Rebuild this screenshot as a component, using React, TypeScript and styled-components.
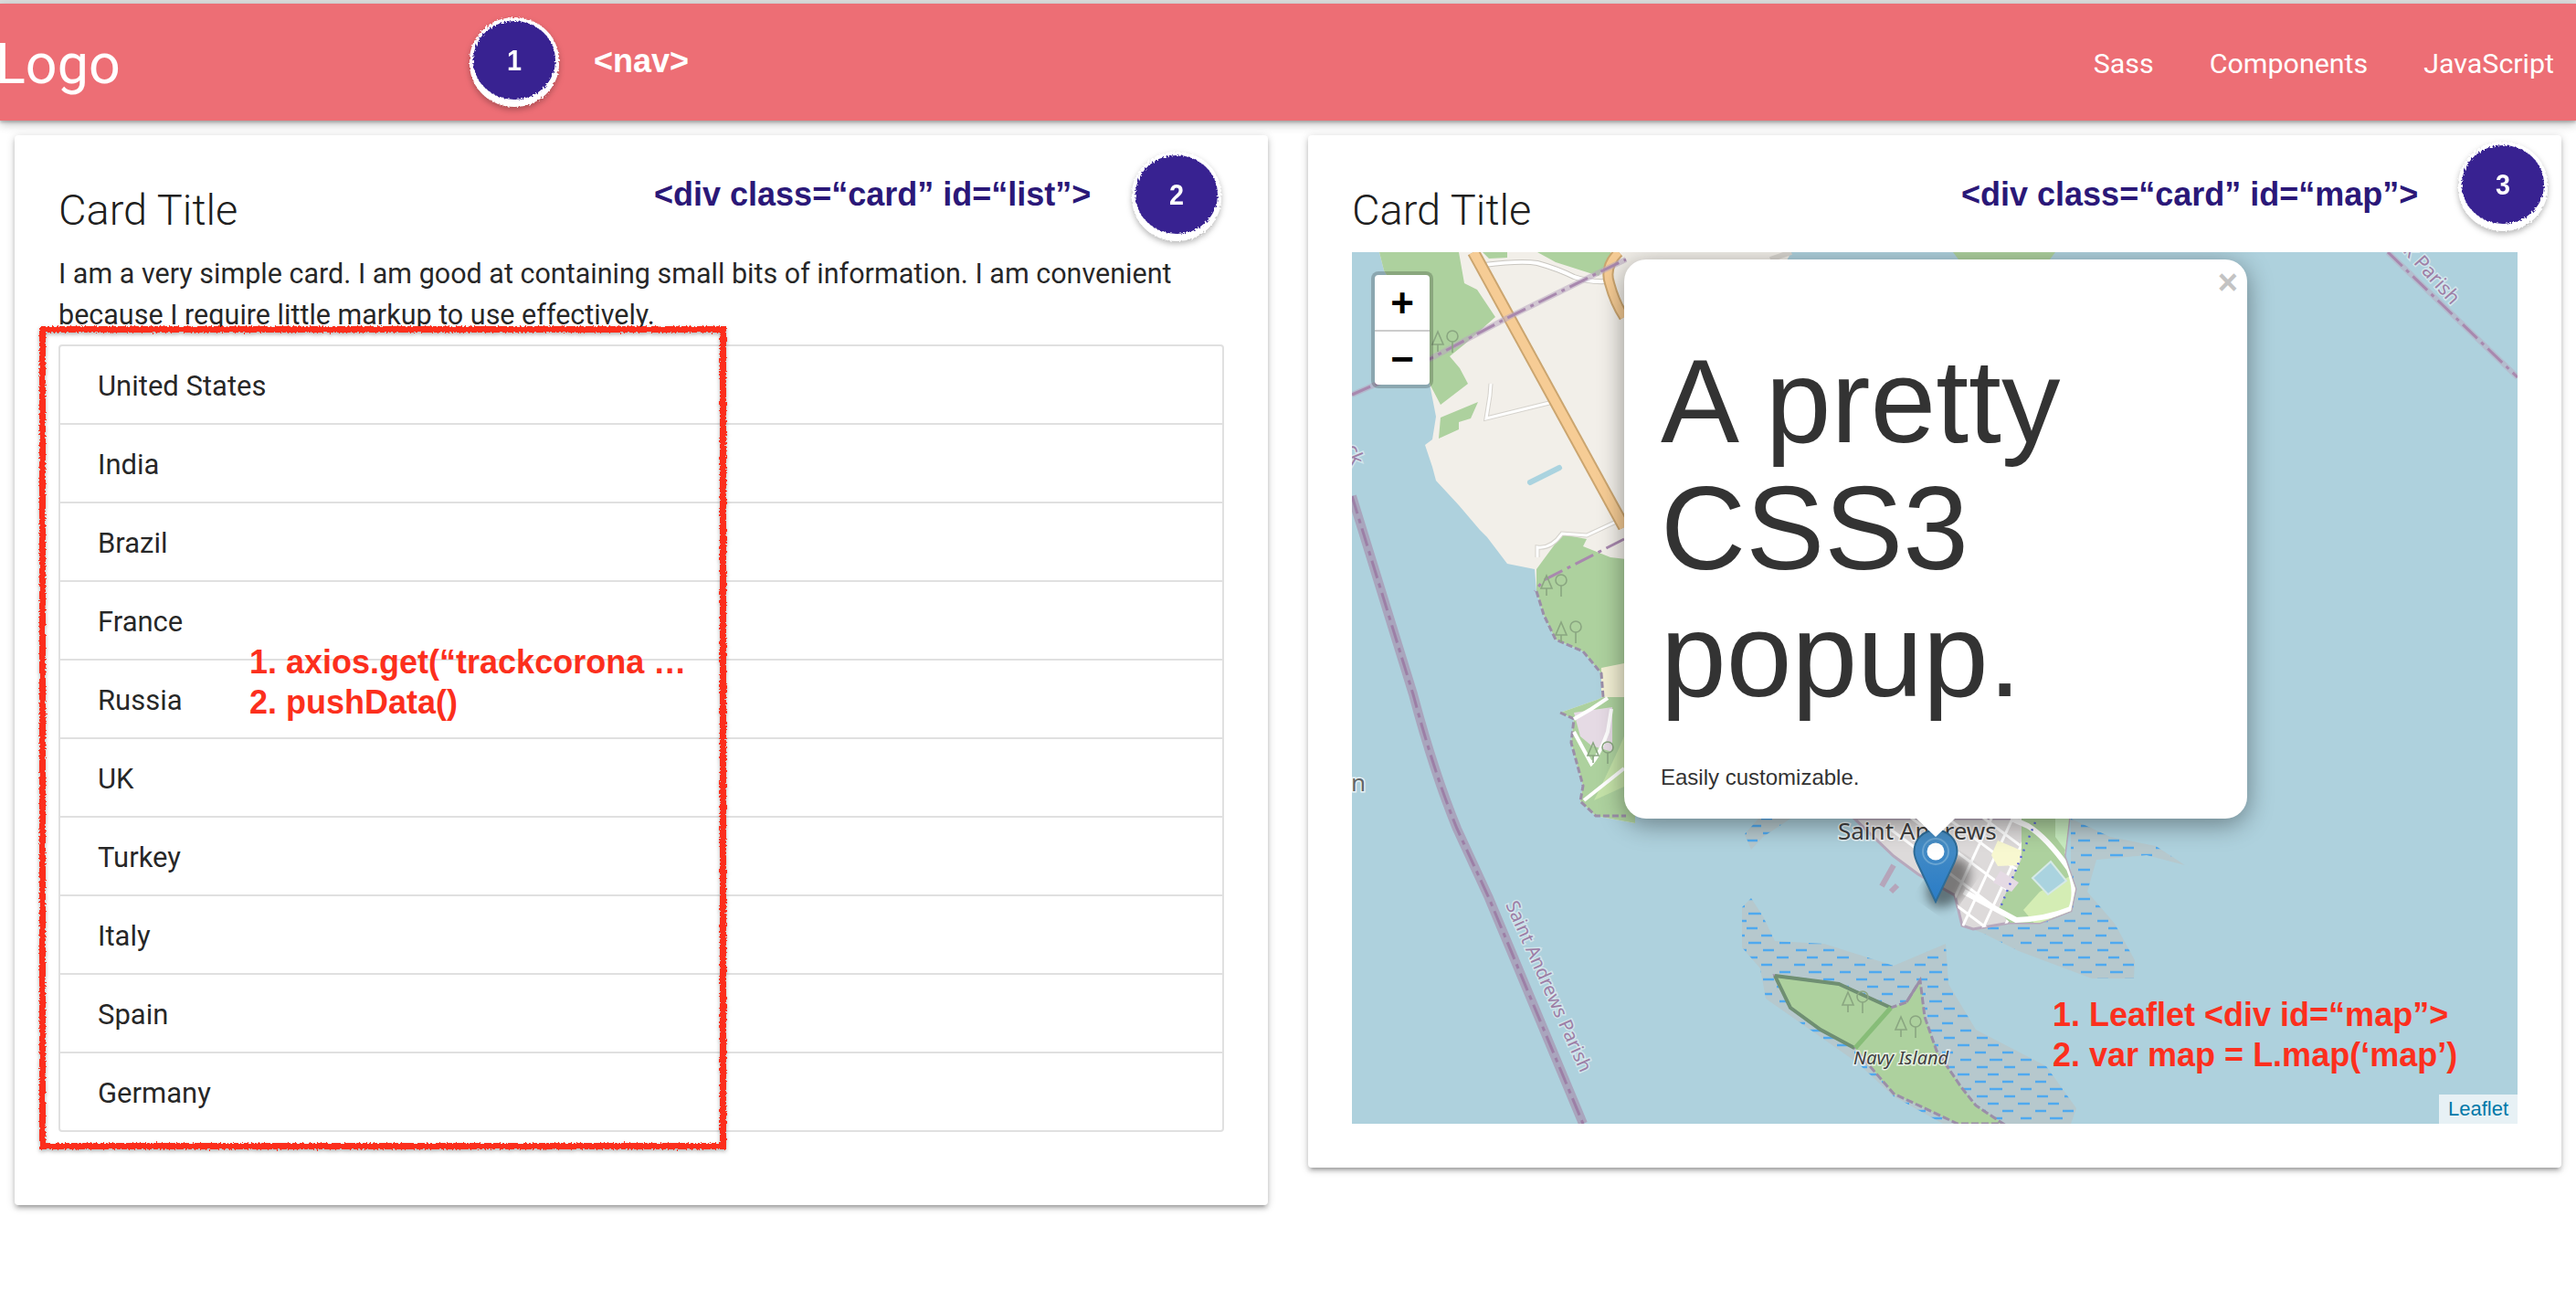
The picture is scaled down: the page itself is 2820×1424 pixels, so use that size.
import React from "react";
import styled, { createGlobalStyle } from "styled-components";

const Global = createGlobalStyle`
  html, body { margin: 0; padding: 0; background: #fff; }
  body { font-family: Roboto, "Liberation Sans", sans-serif; color: rgba(0,0,0,.87); overflow: hidden; }
`;

const Page = styled.div`
  width: 2820px;
  height: 1424px;
  padding-top: 4px;
  box-sizing: border-box;
  position: relative;
  background: linear-gradient(#dcdcdc 0, #dcdcdc 4px, #fff 4px);
`;

const Navbar = styled.nav`
  height: 128px;
  background: #ed6e75;
  display: flex;
  align-items: center;
  justify-content: space-between;
  position: relative;
  box-shadow: 0 4px 10px rgba(0,0,0,.24), 0 2px 3px rgba(0,0,0,.22);
  color: #fff;
`;

const Brand = styled.div`
  font-size: 61px;
  line-height: 128px;
  margin-left: -5px;
  padding-top: 3px;
`;

const NavLinks = styled.div`
  display: flex;
  gap: 61px;
  padding: 2px 24px 0 0;
  font-size: 30.4px;
`;

const NavTag = styled.div`
  position: absolute;
  left: 650px;
  top: 43px;
  font: 700 36px/40px "Liberation Sans", sans-serif;
  color: #fff;
`;

const Main = styled.main`
  display: grid;
  grid-template-columns: 1372px 1372px;
  gap: 44px;
  padding: 16px 16px 0;
  align-items: start;
`;

const Card = styled.section`
  position: relative;
  background: #fff;
  border-radius: 4px;
  padding: 48px;
  box-shadow: 0 4px 4px rgba(0,0,0,.14), 0 6px 2px -4px rgba(0,0,0,.12), 0 2px 10px rgba(0,0,0,.2);
`;

const Title = styled.h2`
  margin: 2px 0 -2px;
  font-size: 47px;
  font-weight: 300;
  line-height: 64px;
  color: rgba(0,0,0,.9);
`;

const Body = styled.p`
  margin: 18px 0 10px;
  font-size: 30.5px;
  line-height: 44.5px;
  white-space: nowrap;
`;

const List = styled.ul`
  list-style: none;
  margin: 0 0 32px;
  padding: 0;
  border: 2px solid #e0e0e0;
  border-radius: 4px;
`;

const Row = styled.li`
  height: 86px;
  box-sizing: border-box;
  padding: 2px 40px 0 41px;
  display: flex;
  align-items: center;
  font-size: 31px;
  border-bottom: 2px solid #e0e0e0;
  &:last-child { border-bottom: none; height: 84px; }
`;

const Tag = styled.div<{ $left: number }>`
  position: absolute;
  left: ${(p) => p.$left}px;
  top: 45px;
  white-space: nowrap;
  font: 700 36px/40px "Liberation Sans", sans-serif;
  color: #2b1878;
`;

const Badge = styled.div<{ $left: number; $top: number }>`
  position: absolute;
  left: ${(p) => p.$left}px;
  top: ${(p) => p.$top}px;
  width: 90px;
  height: 86px;
  display: flex;
  align-items: center;
  justify-content: center;
  color: #fff;
  font: 700 32px/1 "Liberation Sans", sans-serif;
  filter: drop-shadow(0 3px 3px rgba(0,0,0,.28));
`;

const BadgeDisc = styled.div`
  position: absolute;
  inset: 0;
  border-radius: 50%;
  background: #382391;
  box-shadow: 0 0 0 4px #fff, 0 4px 0 4px #fff;
  filter: url(#rough);
`;

const BadgeNumber = styled.span`
  position: relative;
  transform: scaleX(.9);
`;

const RedFrame = styled.div`
  position: absolute;
  left: 27px;
  top: 209px;
  width: 752px;
  height: 901px;
  box-sizing: border-box;
  border: 7px solid #fc2f1d;
  filter: url(#rough) drop-shadow(0 2px 2px rgba(0,0,0,.3));
  pointer-events: none;
`;

const Note = styled.div<{ $left: number; $top: number }>`
  position: absolute;
  left: ${(p) => p.$left}px;
  top: ${(p) => p.$top}px;
  font: 700 36px/44px "Liberation Sans", sans-serif;
  color: #fc2f1d;
  white-space: nowrap;
`;

const MapPanel = styled.div`
  position: relative;
  margin-top: 16px;
  width: 1276px;
  height: 954px;
  overflow: hidden;
  background: #aed1dd;
`;

const MapArt = styled.svg`
  display: block;
  width: 1276px;
  height: 954px;
`;

const LabelDark = styled.text`
  font-family: "Noto Sans", "DejaVu Sans", sans-serif;
  fill: #3f3f3f;
  stroke: rgba(255,255,255,.7);
  stroke-width: 3px;
  paint-order: stroke;
`;

const LabelPurple = styled.text`
  font-family: "Noto Sans", "DejaVu Sans", sans-serif;
  fill: #9d7fa6;
  stroke: rgba(255,255,255,.45);
  stroke-width: 3px;
  paint-order: stroke;
`;

const ZoomControl = styled.div`
  position: absolute;
  left: 21px;
  top: 21px;
  width: 60px;
  border: 4px solid rgba(0,0,0,.2);
  border-radius: 8px;
  background: #fff;
  background-clip: padding-box;
`;

const ZoomButton = styled.div`
  height: 60px;
  padding-top: 2px;
  box-sizing: border-box;
  display: flex;
  align-items: center;
  justify-content: center;
  font: 700 44px/1 "Liberation Sans", sans-serif;
  color: #000;
  & + & { border-top: 2px solid #ccc; height: 60px; }
`;

const Marker = styled.svg`
  position: absolute;
  left: 614px;
  top: 631px;
  width: 50px;
  height: 82px;
`;

const Popup = styled.div`
  position: absolute;
  left: 298px;
  top: 8px;
  width: 682px;
  height: 612px;
  box-sizing: border-box;
  padding: 0 40px;
  background: #fff;
  border-radius: 24px;
  color: #333;
  font-family: "Liberation Sans", sans-serif;
  box-shadow: 0 6px 28px rgba(0,0,0,.4);
`;

const PopupTip = styled.div`
  position: absolute;
  left: 320px;
  top: 100%;
  width: 42px;
  height: 20px;
  background: #fff;
  clip-path: polygon(0 0, 100% 0, 50% 100%);
`;

const PopupClose = styled.div`
  position: absolute;
  right: 10px;
  top: 6px;
  font: 700 38px/38px "Liberation Sans", sans-serif;
  color: #c3c3c3;
`;

const PopupHeading = styled.h1`
  margin: 86px 0 46px;
  font-size: 129px;
  font-weight: 400;
  line-height: 139px;
`;

const PopupText = styled.p`
  margin: 0;
  font-size: 24px;
  line-height: 36px;
`;

const Attribution = styled.div`
  position: absolute;
  right: 0;
  bottom: 0;
  height: 32px;
  padding: 0 10px;
  display: flex;
  align-items: center;
  background: rgba(255,255,255,.7);
  font: 22px "Liberation Sans", sans-serif;
  color: #0078a8;
`;

const COUNTRIES = ["United States", "India", "Brazil", "France", "Russia", "UK", "Turkey", "Italy", "Spain", "Germany"];

const Tree = ({ x, y }: { x: number; y: number }) => (
  <g transform={`translate(${x} ${y})`} fill="none" stroke="#8aa681" strokeWidth="1.6">
    <path d="M-9 -12 L-15 2 L-3 2 Z M-9 2 V10" />
    <circle cx="7" cy="-7" r="6" />
    <path d="M7 -1 V11" />
  </g>
);

const gridA = [-3, -2, -1, 0, 1, 2, 3, 4, 5, 6, 7, 8];
const gridB = [-1, 0, 1, 2, 3, 4, 5, 6, 7];

const SAND_A = "427,717 437,707 450,727 463,754 517,757 593,781 650,757 653,801 683,851 760,891 793,937 787,954 647,954 593,924 553,887 453,817 447,784 427,761";
const SAND_B = "787,620 830,640 880,650 912,671 870,660 815,665 805,700 835,735 857,775 856,795 810,795 770,780 730,765 690,745 668,737 700,738 787,721";
const SAND_C = "430,637 445,620 480,620 450,640 437,654";
const TOWN = "550,620 593,661 620,681 660,704 668,737 680,741 720,734 753,734 787,721 792,697 780,661 783,637 785,620";
const NAVY = "463,792 533,801 590,827 607,821 622,797 627,837 640,874 667,914 683,934 713,954 663,954 593,921 567,891 550,871 513,851 480,827";
const LAND = "30,0 35,20 70,80 85,144 92,180 88,205 80,211 88,235 92,250 117,277 140,304 148,312 170,341 200,347 202,371 210,397 223,424 253,437 273,461 275,487 268,490 228,504 243,511 240,537 253,584 250,601 267,617 310,625 310,20 470,20 481,0";

const MapDrawing = () => (
  <MapArt viewBox="0 0 1276 954">
    <defs>
      <pattern id="dashes" width="66" height="32" patternUnits="userSpaceOnUse">
        <g stroke="#4fa9ef" strokeWidth="2.4">
          <path d="M3 4H16M36 4H48" />
          <path d="M22 12H34M52 12H64" />
          <path d="M6 20H18M38 20H52" />
          <path d="M24 28H36M54 28H66" />
        </g>
      </pattern>
      <clipPath id="town"><polygon points={TOWN} /></clipPath>
      <filter id="soft"><feGaussianBlur stdDeviation="6" /></filter>
    </defs>
    <rect width="1276" height="954" fill="#aed1dd" />

    <polygon points={LAND} fill="#f2efe9" />
    <polygon points="30,0 117,0 123,34 137,41 157,71 123,101 107,114 118,127 127,144 97,167 85,144 70,80 35,20" fill="#add19e" />
    <polygon points="97,181 138,164 130,182 117,186 117,194 95,204" fill="#add19e" />
    <polygon points="143,0 170,0 170,6 150,7" fill="#add19e" />
    <polygon points="203,0 223,11 270,26 283,4 283,0" fill="#add19e" />
    <polygon points="202,347 230,309 257,314 253,322 283,334 310,337 310,625 267,617 250,601 253,584 240,537 243,511 228,504 268,490 275,487 273,461 253,437 223,424 210,397 202,371" fill="#add19e" />
    <polygon points="273,455 298,450 298,487 273,487" fill="#f2efd3" />
    <polygon points="243,504 285,498 285,547 262,540 250,530" fill="#e5dae4" />
    <path d="M265 600 Q285 560 298 530 L298 585 Z" fill="#c4e2a8" />
    <path d="M202 371 L210 397 L223 424 L253 437 L273 461 L275 487 M228 504 L243 511 L240 537 L253 584 L250 601 L267 617 L300 617" fill="none" stroke="#9b8ea8" strokeWidth="3" strokeDasharray="7 3" />
    <path d="M243 511 L262 500 L280 488 M243 525 L262 560 Q270 552 280 525 L284 500 M254 600 L298 565" fill="none" stroke="#fff" strokeWidth="4" />

    <path d="M481 0 L458 8" stroke="#d9d6d0" strokeWidth="6" />
    <polygon points="658,0 770,0 764,8 664,8" fill="#add19e" />

    <path d="M145 14 Q185 9 203 12 Q225 18 243 27 Q260 33 278 32" fill="none" stroke="#c9c6c0" strokeWidth="6" />
    <path d="M145 14 Q185 9 203 12 Q225 18 243 27 Q260 33 278 32" fill="none" stroke="#fff" strokeWidth="4" />
    <path d="M220 164 L147 182 L151 157 L152 144" fill="none" stroke="#d5d2cc" strokeWidth="5" />
    <path d="M220 164 L147 182 L151 157 L152 144" fill="none" stroke="#fff" strokeWidth="3" />
    <path d="M203 334 L203 323 Q218 325 230 308 L257 310 L298 291" fill="none" stroke="#d5d2cc" strokeWidth="5" />
    <path d="M203 334 L203 323 Q218 325 230 308 L257 310 L298 291" fill="none" stroke="#fff" strokeWidth="3" />
    <path d="M195 252 L227 236" stroke="#aad3df" strokeWidth="6" strokeLinecap="round" />
    <path d="M133 0 L298 301" stroke="#cba56f" strokeWidth="14" />
    <path d="M133 0 L298 301" stroke="#f6cc95" strokeWidth="10" />
    <path d="M292 0 Q276 16 282 34 Q288 56 298 71" fill="none" stroke="#cba56f" strokeWidth="12" />
    <path d="M292 0 Q276 16 282 34 Q288 56 298 71" fill="none" stroke="#f6cc95" strokeWidth="8" />

    <path d="M0 156 L23 146 L87 116 L170 72 L277 19 L300 8" fill="none" stroke="#b8a6bf" strokeWidth="6" strokeOpacity=".55" />
    <path d="M0 156 L23 146 L87 116 L170 72 L277 19 L300 8" fill="none" stroke="#a888ae" strokeWidth="3" strokeDasharray="22 6 4 6" />
    <path d="M298 314 L210 359 L200 371" fill="none" stroke="#a888ae" strokeWidth="3" strokeDasharray="22 6 4 6" />

    <path d="M0 267 L67 484 Q90 570 115 631 L150 707 L253 954" fill="none" stroke="#a9a5bd" strokeWidth="10" />
    <path d="M0 267 L67 484 Q90 570 115 631 L150 707 L253 954" fill="none" stroke="#9c7fa6" strokeWidth="3" strokeDasharray="20 6 5 6" />
    <path d="M1134 0 L1276 137" fill="none" stroke="#b9a9c0" strokeWidth="6" strokeOpacity=".5" />
    <path d="M1134 0 L1276 137" fill="none" stroke="#a888ae" strokeWidth="3" strokeDasharray="22 6 4 6" />

    <polygon points={SAND_A} fill="#b6c8cd" />
    <polygon points={SAND_A} fill="url(#dashes)" />
    <polygon points={SAND_B} fill="#b6c8cd" />
    <polygon points={SAND_B} fill="url(#dashes)" />
    <polygon points={SAND_C} fill="#b6c8cd" />
    <polygon points={SAND_C} fill="url(#dashes)" />

    <polygon points={NAVY} fill="#add19e" stroke="#9b8ea8" strokeWidth="3" strokeDasharray="8 3" />
    <path d="M463 792 L533 801 L590 827 M463 792 L480 827 L513 851 L550 871" fill="none" stroke="#6f8f72" strokeWidth="4" />
    <path d="M590 827 L551 871" stroke="#87bd78" strokeWidth="5" />
    <path d="M607 821 L622 797" stroke="#9b8ea8" strokeWidth="3" />
    <Tree x={552} y={822} />
    <Tree x={610} y={849} />

    <polygon points={TOWN} fill="#dddada" stroke="#b7a8bc" strokeWidth="3" />
    <g clipPath="url(#town)">
      {gridA.map((k) => (
        <path key={k} d={`M${590 + k * 14} ${632 - k * 19} l170 127`} stroke="#fff" strokeWidth="3" />
      ))}
      {gridB.map((k) => (
        <path key={k} d={`M${662 + k * 19} ${752 + k * 9} l62 -134`} stroke="#fff" strokeWidth="3" />
      ))}
      <polygon points="733,620 790,620 795,725 727,740 707,721 733,664" fill="#add19e" />
      <polygon points="753,700 792,680 795,725 750,738 735,720" fill="#d4edb4" />
      <polygon points="770,620 790,620 785,660 770,640" fill="#c8ecc0" />
      <polygon points="707,644 733,655 730,671 707,672 700,660" fill="#f8f8d0" />
      <polygon points="710,677 730,690 722,700 702,690" fill="#e5dae4" />
      <polygon points="745,685 765,667 782,688 762,703" fill="#aad3df" stroke="#d5e9e6" strokeWidth="2" />
      <path d="M670 700 L727 731 Q760 730 787 719 Q795 700 785 675 Q760 640 740 628 L722 620" fill="none" stroke="#fff" strokeWidth="6" />
      <path d="M748 624 L710 717" stroke="#5a64d8" strokeWidth="2.4" strokeDasharray="2 6" />
    </g>
    <path d="M580 694 L593 671 M590 700 L597 693" stroke="#b5a5ba" strokeWidth="6" />
    <ellipse cx="653" cy="690" rx="20" ry="30" transform="rotate(35 653 690)" fill="rgba(0,0,0,.45)" filter="url(#soft)" />

    <Tree x={103} y={99} />
    <Tree x={222} y={366} />
    <Tree x={238} y={417} />
    <Tree x={273} y={549} />

    <LabelDark x="532" y="643" fontSize="26">Saint Andrews</LabelDark>
    <LabelDark x="549" y="889" fontSize="20" fontStyle="italic">Navy Island</LabelDark>
    <LabelDark x="-1" y="590" fontSize="26" fillOpacity=".8">n</LabelDark>
    <LabelPurple x="168" y="714" fontSize="20.5" transform="rotate(66 168 714)">Saint Andrews Parish</LabelPurple>
    <LabelPurple x="1150" y="-1" fontSize="21.5" transform="rotate(48 1150 -1)">k Parish</LabelPurple>
    <LabelPurple x="-8" y="214" fontSize="21.5" transform="rotate(68 -8 214)">ck</LabelPurple>
  </MapArt>
);

export default function App() {
  return (
    <Page>
      <Global />
      <svg width="0" height="0" style={{ position: "absolute" }}>
        <defs>
          <filter id="rough" x="-5%" y="-5%" width="110%" height="110%">
            <feTurbulence type="fractalNoise" baseFrequency="0.5" numOctaves="2" seed="4" />
            <feDisplacementMap in="SourceGraphic" scale="5" />
          </filter>
        </defs>
      </svg>

      <Navbar>
        <Brand>Logo</Brand>
        <NavTag>&lt;nav&gt;</NavTag>
        <Badge $left={518} $top={19}>
          <BadgeDisc />
          <BadgeNumber>1</BadgeNumber>
        </Badge>
        <NavLinks>
          <span>Sass</span>
          <span>Components</span>
          <span>JavaScript</span>
        </NavLinks>
      </Navbar>

      <Main>
        <Card>
          <Title>Card Title</Title>
          <Body>
            I am a very simple card. I am good at containing small bits of information. I am convenient
            <br />
            because I require little markup to use effectively.
          </Body>
          <List>
            {COUNTRIES.map((c) => (
              <Row key={c}>{c}</Row>
            ))}
          </List>
          <Tag $left={700}>&lt;div class=“card” id=“list”&gt;</Tag>
          <Badge $left={1227} $top={22}>
            <BadgeDisc />
            <BadgeNumber>2</BadgeNumber>
          </Badge>
          <RedFrame />
          <Note $left={257} $top={555}>
            1. axios.get(“trackcorona …
            <br />
            2. pushData()
          </Note>
        </Card>

        <Card>
          <Title>Card Title</Title>
          <MapPanel>
            <MapDrawing />
            <ZoomControl>
              <ZoomButton>+</ZoomButton>
              <ZoomButton>−</ZoomButton>
            </ZoomControl>
            <Marker viewBox="0 0 50 82">
              <defs>
                <linearGradient id="pin" x1="0" y1="0" x2="0" y2="1">
                  <stop offset="0" stopColor="#4a8fc4" />
                  <stop offset="1" stopColor="#2a7cc7" />
                </linearGradient>
              </defs>
              <path d="M25 1.5C11.7 1.5 1.5 12 1.5 25c0 6 2.5 11 5 16L25 80l18.5-39c2.5-5 5-10 5-16C48.5 12 38.3 1.5 25 1.5Z" fill="url(#pin)" stroke="#2e6c97" strokeWidth="2" />
              <circle cx="25" cy="25" r="14" fill="none" stroke="#6aa5d2" strokeWidth="2" />
              <circle cx="25" cy="25" r="9.5" fill="#fff" />
            </Marker>
            <Popup>
              <PopupClose>×</PopupClose>
              <PopupHeading>A pretty CSS3 popup.</PopupHeading>
              <PopupText>Easily customizable.</PopupText>
              <PopupTip />
            </Popup>
            <Attribution>Leaflet</Attribution>
          </MapPanel>
          <Tag $left={715}>&lt;div class=“card” id=“map”&gt;</Tag>
          <Badge $left={1263} $top={11}>
            <BadgeDisc />
            <BadgeNumber>3</BadgeNumber>
          </Badge>
          <Note $left={815} $top={941}>
            1. Leaflet &lt;div id=“map”&gt;
            <br />
            2. var map = L.map(‘map’)
          </Note>
        </Card>
      </Main>
    </Page>
  );
}
